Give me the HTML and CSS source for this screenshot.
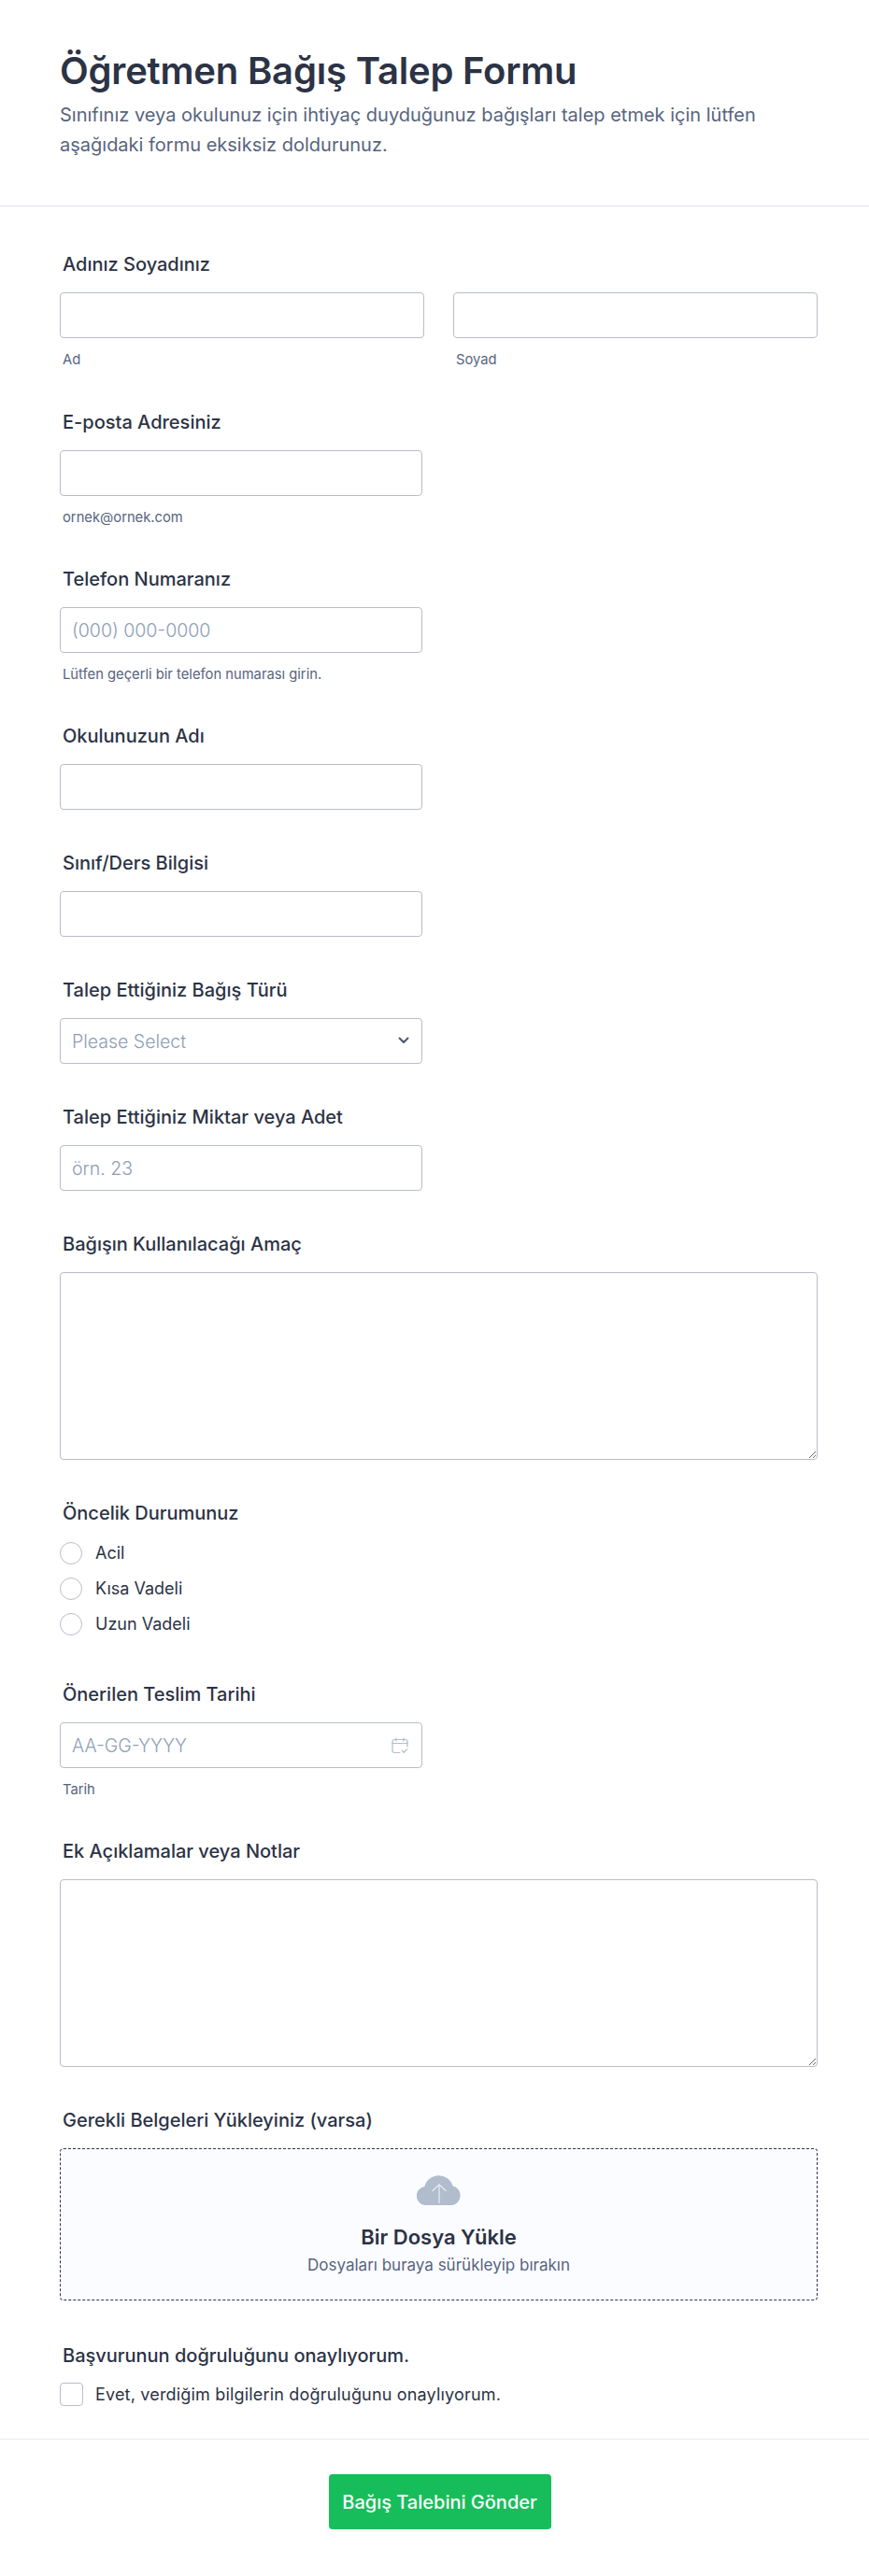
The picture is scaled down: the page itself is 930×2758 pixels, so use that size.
FILE: index.html
```html
<!DOCTYPE html>
<html lang="tr">
<head>
    <meta charset="UTF-8">
    <meta name="viewport" content="width=device-width, initial-scale=1.0">
    <title>Öğretmen Bağış Talep Formu</title>
    <link rel="stylesheet" href="styles.css">
</head>
<body>

<form class="form">
    <header class="form-header">
        <h1>Öğretmen Bağış Talep Formu</h1>
        <p>Sınıfınız veya okulunuz için ihtiyaç duyduğunuz bağışları talep etmek için lütfen aşağıdaki formu eksiksiz doldurunuz.</p>
    </header>

    <div class="form-body">
        <div class="field field-name">
            <label class="field-label">Adınız Soyadınız</label>
            <div class="name-row">
                <div>
                    <input class="input input-full" type="text">
                    <div class="sublabel">Ad</div>
                </div>
                <div>
                    <input class="input input-full" type="text">
                    <div class="sublabel">Soyad</div>
                </div>
            </div>
        </div>

        <div class="field">
            <label class="field-label">E-posta Adresiniz</label>
            <input class="input" type="email">
            <div class="sublabel">ornek@ornek.com</div>
        </div>

        <div class="field">
            <label class="field-label">Telefon Numaranız</label>
            <input class="input" type="tel" placeholder="(000) 000-0000">
            <div class="sublabel">Lütfen geçerli bir telefon numarası girin.</div>
        </div>

        <div class="field">
            <label class="field-label">Okulunuzun Adı</label>
            <input class="input" type="text">
        </div>

        <div class="field">
            <label class="field-label">Sınıf/Ders Bilgisi</label>
            <input class="input" type="text">
        </div>

        <div class="field">
            <label class="field-label">Talep Ettiğiniz Bağış Türü</label>
            <div class="input-wrap">
                <select class="input select">
                    <option>Please Select</option>
                </select>
                <svg class="input-icon chevron" width="12" height="8" viewBox="0 0 12 8" fill="none">
                    <path d="M1.5 1.5 6 6l4.5-4.5" stroke="#4c5672" stroke-width="2" stroke-linecap="round" stroke-linejoin="round"/>
                </svg>
            </div>
        </div>

        <div class="field">
            <label class="field-label">Talep Ettiğiniz Miktar veya Adet</label>
            <input class="input" type="text" placeholder="örn. 23">
        </div>

        <div class="field">
            <label class="field-label">Bağışın Kullanılacağı Amaç</label>
            <textarea class="input textarea"></textarea>
        </div>

        <div class="field field-options">
            <label class="field-label label-options">Öncelik Durumunuz</label>
            <div class="options">
                <label class="option"><span class="radio"></span>Acil</label>
                <label class="option"><span class="radio"></span>Kısa Vadeli</label>
                <label class="option"><span class="radio"></span>Uzun Vadeli</label>
            </div>
        </div>

        <div class="field">
            <label class="field-label">Önerilen Teslim Tarihi</label>
            <div class="input-wrap">
                <input class="input input-full" type="text" placeholder="AA-GG-YYYY">
                <svg class="input-icon calendar" width="18" height="18" viewBox="0 0 18 18" fill="none" stroke="#b1bccd" stroke-width="1.2" stroke-linecap="round" stroke-linejoin="round">
                    <path d="M9 16.5H3a2 2 0 0 1-2-2V4.5a2 2 0 0 1 2-2h12a2 2 0 0 1 2 2V10"/>
                    <path d="M1 6.5h16M5 1v3M13 1v3"/>
                    <path d="m11.5 14.5 1.8 1.8 3.4-3.6"/>
                </svg>
            </div>
            <div class="sublabel">Tarih</div>
        </div>

        <div class="field">
            <label class="field-label">Ek Açıklamalar veya Notlar</label>
            <textarea class="input textarea"></textarea>
        </div>

        <div class="field field-upload">
            <label class="field-label">Gerekli Belgeleri Yükleyiniz (varsa)</label>
            <div class="upload">
                <svg width="48" height="33" viewBox="0 0 48 33">
                    <path d="M10 33A10 10 0 0 1 8.4 13.1 15.6 15.6 0 0 1 38.6 12.6 10.4 10.4 0 0 1 38 33Z" fill="#b1bccd"/>
                    <path d="M24 31V11M16.5 18 24 11l7.5 7" fill="none" stroke="#e4e9f1" stroke-width="1.3"/>
                </svg>
                <div class="upload-title">Bir Dosya Yükle</div>
                <div class="upload-text">Dosyaları buraya sürükleyip bırakın</div>
            </div>
        </div>

        <div class="field field-last">
            <label class="field-label label-check">Başvurunun doğruluğunu onaylıyorum.</label>
            <label class="option option-check"><span class="checkbox"></span>Evet, verdiğim bilgilerin doğruluğunu onaylıyorum.</label>
        </div>
    </div>

    <footer class="form-footer">
        <button class="submit" type="button">Bağış Talebini Gönder</button>
    </footer>
</form>

</body>
</html>
```

FILE: styles.css
```css
* { box-sizing: border-box; }
body {
    margin: 0;
    background: #fff;
    color: #2c3345;
    font-family: Inter, "Liberation Sans", sans-serif;
}
.form-header {
    height: 221px;
    padding: 50px 55px 0 64px;
    border-bottom: 1px solid #dfe3ec;
}
.form-header h1 {
    margin: 0;
    font-size: 40px;
    line-height: 52px;
    font-weight: 600;
    letter-spacing: -0.2px;
    color: #2c3345;
}
.form-header p {
    margin: 5px 0 0;
    font-size: 20px;
    line-height: 32px;
    color: #57647e;
}
.form-body { padding: 50px 55px 0 64px; }
.field { margin-bottom: 45px; }
.field-name { margin-bottom: 46px; }
.field-options { margin-bottom: 51px; }
.field-upload { margin-bottom: 47px; }
.field-last { margin-bottom: 0; }
.field-label {
    display: block;
    margin: 0 0 18px 3px;
    font-size: 20px;
    line-height: 25px;
    font-weight: 500;
    color: #2c3345;
}
.field-label { margin-bottom: 17px; }
.label-options { margin-bottom: 18px; }
.label-check { margin-bottom: 16px; }
.name-row {
    display: grid;
    grid-template-columns: 390px 390px;
    gap: 31px;
}
.input {
    display: block;
    width: 388px;
    height: 49px;
    padding: 0 12px;
    background: #fff;
    border: 1px solid #b8bdc9;
    border-radius: 4px;
    font-family: inherit;
    font-size: 19.5px;
    font-weight: 300;
    color: #2c3345;
}
.input-full { width: 100%; }
.input::placeholder { color: #8d9db5; opacity: 1; }
.input-wrap { position: relative; width: 388px; }
.input-icon { position: absolute; }
.chevron { right: 14px; top: 20px; }
.calendar { right: 15px; top: 16px; }
.select {
    appearance: none;
    width: 100%;
    color: #8d9db5;
}
.textarea {
    width: 100%;
    height: 201px;
    padding: 10px 12px;
}
.sublabel {
    margin: 14px 0 0 3px;
    font-size: 14.75px;
    line-height: 18px;
    color: #57647e;
}
.options {
    display: flex;
    flex-direction: column;
    gap: 14px;
}
.option {
    display: flex;
    align-items: center;
    gap: 14px;
    font-size: 18px;
    line-height: 24px;
    color: #2c3345;
}
.option-check {
    gap: 13px;
    letter-spacing: 0.18px;
}
.radio {
    width: 24px;
    height: 24px;
    border: 1px solid #b8bdc9;
    border-radius: 50%;
}
.checkbox {
    width: 25px;
    height: 25px;
    border: 1px solid #b8bdc9;
    border-radius: 4px;
}
.upload {
    display: flex;
    flex-direction: column;
    align-items: center;
    height: 163px;
    padding-top: 27px;
    background: #fbfcff;
    border: 1px dashed #2f3650;
    border-radius: 4px;
}
.upload-title {
    margin-top: 20px;
    font-size: 22px;
    line-height: 28px;
    font-weight: 600;
    color: #2c3345;
}
.upload-text {
    margin-top: 5px;
    font-size: 17px;
    line-height: 22px;
    color: #57647e;
}
.form-footer {
    display: flex;
    justify-content: center;
    margin-top: 35px;
    padding: 37px 0 50px 11px;
    border-top: 1px solid #eaebf2;
}
.submit {
    width: 238px;
    height: 59px;
    background: #18bd5b;
    border: none;
    border-radius: 4px;
    font-family: inherit;
    font-size: 20px;
    font-weight: 500;
    color: #fff;
    cursor: pointer;
}
```
